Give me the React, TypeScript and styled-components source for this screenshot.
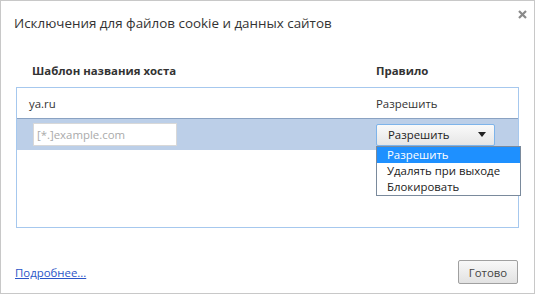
import React from "react";
import styled, { createGlobalStyle } from "styled-components";

const GlobalStyle = createGlobalStyle`
  html, body {
    margin: 0;
    padding: 0;
    background: #fff;
  }
  body {
    font-family: "Open Sans", "Noto Sans", sans-serif;
    font-size: 11.4px;
    color: #333;
  }
`;

const Dialog = styled.div`
  box-sizing: border-box;
  width: 535px;
  height: 294px;
  border: 1px solid #c8c8c8;
  display: flex;
  flex-direction: column;
`;

const TitleBar = styled.div`
  display: flex;
  justify-content: space-between;
  align-items: flex-start;
  padding: 12px 7px 0 13px;
  height: 41px;
`;

const Title = styled.h1`
  margin: 0;
  font-size: 13.4px;
  font-weight: normal;
  color: #333;
  line-height: 20px;
`;

const CloseButton = styled.button`
  border: 0;
  background: none;
  padding: 0;
  width: 9px;
  height: 9px;
  margin-top: -3px;
  cursor: pointer;
  display: flex;
`;

const HeaderRow = styled.div`
  display: grid;
  grid-template-columns: 359px 1fr;
  margin: 0 15px;
  padding-left: 1px;
  height: 33px;
  align-items: center;
  font-weight: bold;
  color: #333;
  & > span:first-child {
    padding-left: 15px;
  }
`;

const List = styled.div`
  margin: 0 15px;
  height: 141px;
  box-sizing: border-box;
  border: 1px solid #a6c8ee;
  display: flex;
  flex-direction: column;
`;

const Row = styled.div<{ $selected?: boolean; $lead?: boolean }>`
  display: grid;
  grid-template-columns: 359px 1fr;
  align-items: center;
  height: 31px;
  box-sizing: border-box;
  background: ${p => (p.$selected ? "#bccfe8" : "transparent")};
  border-bottom: ${p => (p.$lead ? "1px solid #8aa2c2" : "0")};
  flex-shrink: 0;
`;

const Cell = styled.div<{ $pad?: number }>`
  padding-left: ${p => p.$pad ?? 0}px;
  position: relative;
`;

const Input = styled.input`
  box-sizing: border-box;
  width: 144px;
  height: 23px;
  border: 1px solid #d8d8d8;
  background: #fff;
  padding: 0 3px;
  font-family: inherit;
  font-size: 11.4px;
  color: #333;
  outline: none;
  &::placeholder {
    color: #aaa;
  }
`;

const Select = styled.div`
  box-sizing: border-box;
  width: 119px;
  height: 22px;
  border: 1px solid #7eb4ea;
  border-radius: 2px;
  background: linear-gradient(#fafafa, #e6e6e6);
  display: flex;
  align-items: center;
  justify-content: space-between;
  padding: 0 8px 0 11px;
  color: #222;
`;

const Arrow = styled.span`
  width: 0;
  height: 0;
  border-left: 4px solid transparent;
  border-right: 4px solid transparent;
  border-top: 5px solid #222;
`;

const Menu = styled.ul`
  position: absolute;
  top: 22px;
  left: 0;
  width: 145px;
  box-sizing: border-box;
  margin: 0;
  padding: 0;
  list-style: none;
  border: 1px solid #7a8a9c;
  background: #fff;
  z-index: 2;
`;

const MenuItem = styled.li<{ $active?: boolean }>`
  height: 16px;
  line-height: 16px;
  padding-left: 10px;
  background: ${p => (p.$active ? "#1e90ff" : "transparent")};
  color: ${p => (p.$active ? "#fff" : "#222")};
`;

const Footer = styled.div`
  display: flex;
  justify-content: space-between;
  align-items: center;
  padding: 32px 16px 0 14px;
`;

const MoreLink = styled.a`
  color: #2b55c8;
  text-decoration: underline;
  cursor: pointer;
`;

const DoneButton = styled.button`
  box-sizing: border-box;
  width: 60px;
  height: 24px;
  border: 1px solid #a0a0a0;
  border-radius: 2px;
  background: linear-gradient(#f8f8f8, #e2e2e2);
  font-family: inherit;
  font-size: 11.4px;
  color: #444;
  padding: 0;
`;

export default function App() {
  return (
    <Dialog>
      <GlobalStyle />
      <TitleBar>
        <Title>Исключения для файлов cookie и данных сайтов</Title>
        <CloseButton aria-label="Закрыть">
          <svg width="9" height="9" viewBox="0 0 9 9">
            <path d="M1 1 L8 8 M8 1 L1 8" stroke="#8a8a8a" strokeWidth="2.2" />
          </svg>
        </CloseButton>
      </TitleBar>
      <HeaderRow>
        <span>Шаблон названия хоста</span>
        <span>Правило</span>
      </HeaderRow>
      <List>
        <Row $lead>
          <Cell $pad={12}>ya.ru</Cell>
          <Cell>Разрешить</Cell>
        </Row>
        <Row $selected>
          <Cell $pad={16}>
            <Input placeholder="[*.]example.com" />
          </Cell>
          <Cell>
            <Select>
              <span>Разрешить</span>
              <Arrow />
            </Select>
            <Menu>
              <MenuItem $active>Разрешить</MenuItem>
              <MenuItem>Удалять при выходе</MenuItem>
              <MenuItem>Блокировать</MenuItem>
            </Menu>
          </Cell>
        </Row>
      </List>
      <Footer>
        <MoreLink>Подробнее...</MoreLink>
        <DoneButton>Готово</DoneButton>
      </Footer>
    </Dialog>
  );
}
